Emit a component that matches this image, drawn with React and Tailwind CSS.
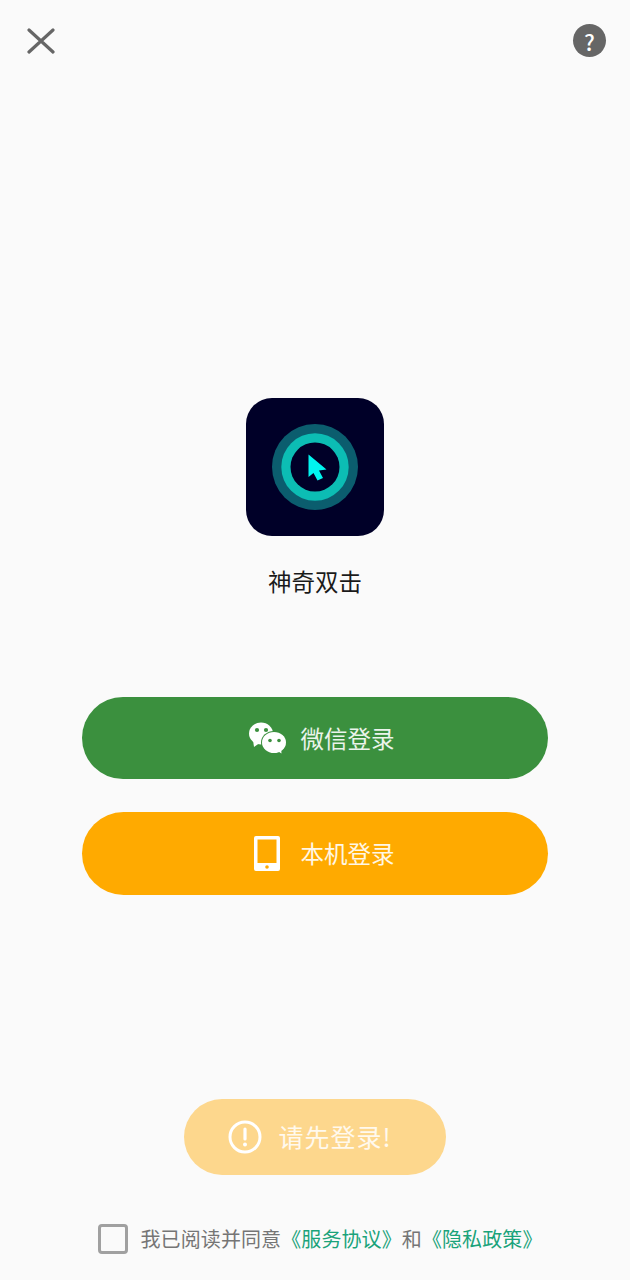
import React from 'react';

const font = { fontFamily: '"Noto Sans CJK SC", sans-serif' };

function WechatIcon() {
    return (
        <svg width="37" height="32" viewBox="0 0 37 32">
            <ellipse cx="12" cy="11.500" rx="12" ry="11" fill="#fff" />
            <path d="M4 18 L5 25 L12 20 Z" fill="#fff" />
            <ellipse cx="25" cy="20.500" rx="13" ry="11.500" fill="#3b903e" />
            <ellipse cx="25" cy="20.500" rx="12" ry="10.500" fill="#fff" />
            <path d="M27 28 L32.500 31.500 L32 25 Z" fill="#fff" />
            <circle cx="8" cy="8" r="2.100" fill="#3b903e" />
            <circle cx="17" cy="8" r="2.100" fill="#3b903e" />
            <circle cx="21" cy="18.500" r="1.800" fill="#3b903e" />
            <circle cx="30" cy="18.500" r="1.800" fill="#3b903e" />
        </svg>
    );
}

function PhoneIcon() {
    return (
        <svg width="26" height="35" viewBox="0 0 26 35">
            <path fillRule="evenodd" d="M2 0h22a2 2 0 0 1 2 2v31a2 2 0 0 1-2 2H2a2 2 0 0 1-2-2V2a2 2 0 0 1 2-2zm1.500 3.500v23.500h19V3.500z" fill="#fff" />
            <circle cx="13" cy="31" r="1.800" fill="#ffaa00" />
        </svg>
    );
}

function AppLogo() {
    return (
        <div className="w-[138px] h-[138px] rounded-[26px] bg-[#000028] flex items-center justify-center">
            <svg width="88" height="88" viewBox="0 0 88 88">
                <circle cx="44" cy="44" r="43" fill="#0b5d6e" />
                <circle cx="44" cy="44" r="33.700" fill="#0cbdb4" />
                <circle cx="44" cy="44" r="24.500" fill="#000028" />
                <path d="M37.500 31.500 L37.500 54 L42.500 50 L46.500 57.500 L52 55 L48 47.500 L55.500 46.500 Z" fill="#00f5f0" />
            </svg>
        </div>
    );
}

export default function App() {
    return (
        <div className="w-[630px] h-[1280px] bg-[#fafafa] flex flex-col items-center" style={font}>
            <div className="w-full flex items-start justify-between pl-[27px] pr-[24px] pt-[24px]">
                <svg className="mt-[4px]" width="28" height="26" viewBox="0 0 28 26">
                    <path d="M2 2 L26 24 M26 2 L2 24" stroke="#666666" strokeWidth="3.200" strokeLinecap="round" />
                </svg>
                <div className="w-[33px] h-[33px] rounded-full bg-[#666666] flex items-center justify-center text-white text-[22px] font-medium leading-none">
                    ?
                </div>
            </div>

            <div className="mt-[341px]">
                <AppLogo />
            </div>
            <div className="mt-[27px] text-[23.500px] leading-[36px] text-[#1a1a1a]">神奇双击</div>

            <div className="mt-[98px] w-[466px] flex flex-col gap-[33px]">
                <div className="h-[82px] rounded-full bg-[#3b903e] flex items-center justify-center gap-[15px] pl-[13px] text-white/90 text-[23.500px]">
                    <WechatIcon />
                    <span className="pt-[1px]">微信登录</span>
                </div>
                <div className="h-[83px] rounded-full bg-[#ffaa00] flex items-center justify-center gap-[21px] pl-[18px] text-white/90 text-[23.500px]">
                    <PhoneIcon />
                    <span>本机登录</span>
                </div>
            </div>

            <div className="mt-[204px] w-[262px] h-[76px] rounded-full bg-[#fdd78d] flex items-center justify-center gap-[16px] pr-[10px] text-white/85 text-[25px] tracking-[1px]">
                <svg width="34" height="34" viewBox="0 0 34 34">
                    <circle cx="17" cy="17" r="15" fill="none" stroke="#fff" strokeWidth="3" />
                    <path d="M17 9 V19" stroke="#fff" strokeWidth="3.200" strokeLinecap="round" />
                    <circle cx="17" cy="24.500" r="2" fill="#fff" />
                </svg>
                <span>请先登录!</span>
            </div>

            <div className="mt-[48px] flex items-center gap-[12px] pl-[11px] text-[20px] tracking-[0.1px] leading-[30px] text-[#757575]">
                <div className="w-[30px] h-[30px] rounded-[4px] border-[3.500px] border-[#a0a0a0]" />
                <div className="whitespace-nowrap pt-[1px]">
                    我已阅读并同意<span className="text-[#1aa37a]">《服务协议》</span>和<span className="text-[#1aa37a]">《隐私政策》</span>
                </div>
            </div>
        </div>
    );
}
